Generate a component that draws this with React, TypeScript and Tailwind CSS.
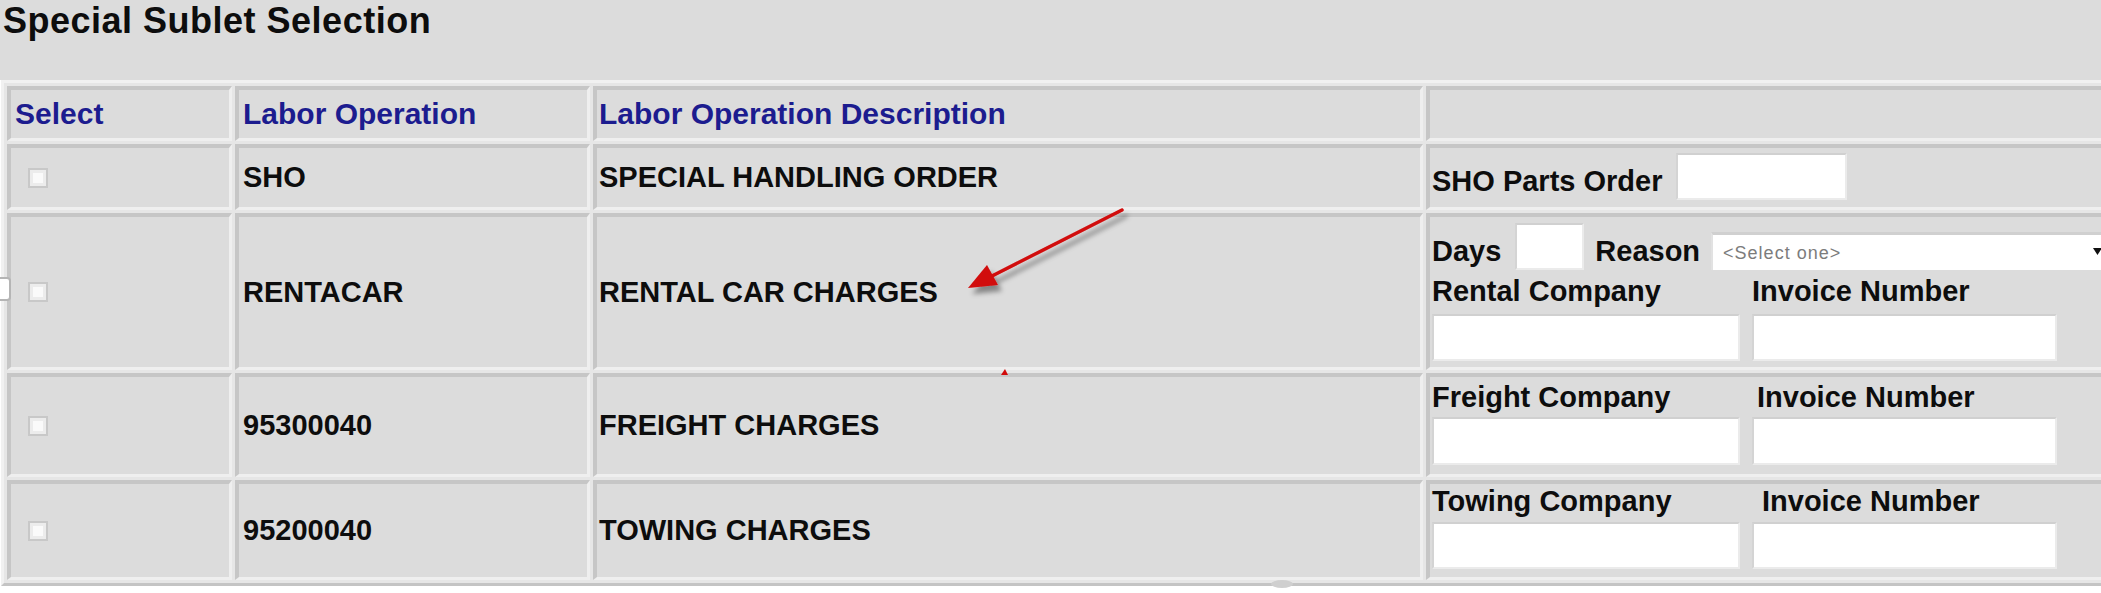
import React from "react";

const cell =
  "flex bg-[#dcdcdc] border-t-[4px] border-l-[4px] border-b-[3px] border-r-[3px] border-t-[#c6c6c6] border-l-[#c6c6c6] border-b-[#efefef] border-r-[#efefef]";
const head = "text-[30px] font-bold leading-none text-[#1c1c8f]";
const body = "text-[29px] font-bold leading-none text-[#0d0d0d]";
const input =
  "block bg-white border-2 border-t-[#d0d0d0] border-l-[#d4d4d4] border-b-[#ebebeb] border-r-[#ebebeb] outline-none";

function Checkbox() {
  return (
    <div className="ml-[17px] w-[20px] h-[20px] border-2 border-[#c8c8c8] bg-[#ececec] flex items-center justify-center">
      <div className="w-[10px] h-[10px] bg-[#fafafa]" />
    </div>
  );
}

export default function App() {
  return (
    <div className="relative w-[2101px] h-[593px] overflow-hidden bg-white font-['Liberation_Sans',Arial,sans-serif] text-[#111]">
      <div className="h-[80px] bg-[#dcdcdc] pl-[3px] pt-[3px]">
        <h1 className="text-[36px] font-bold leading-none tracking-[0.5px] text-[#0d0d0d]">
          Special Sublet Selection
        </h1>
      </div>

      <div className="ml-[1px] w-max grid grid-cols-[225px_355px_830px_720px] grid-rows-[55px_66px_157px_104px_100px] gap-[3px] p-[3px] border-[3px] border-t-[#f1f1f1] border-l-[#f1f1f1] border-b-[#c4c4c4] border-r-[#c4c4c4] bg-[#e6e6e6]">
        {/* header */}
        <div className={cell + " items-center pl-[4px]"}>
          <span className={head}>Select</span>
        </div>
        <div className={cell + " items-center pl-[4px]"}>
          <span className={head}>Labor Operation</span>
        </div>
        <div className={cell + " items-center pl-[2px]"}>
          <span className={head}>Labor Operation Description</span>
        </div>
        <div className={cell} />

        {/* SHO */}
        <div className={cell + " items-center"}>
          <Checkbox />
        </div>
        <div className={cell + " items-center pl-[4px]"}>
          <span className={body}>SHO</span>
        </div>
        <div className={cell + " items-center pl-[2px]"}>
          <span className={body}>SPECIAL HANDLING ORDER</span>
        </div>
        <div className={cell + " flex-col pl-[2px]"}>
          <div className="flex items-end mt-[5px]">
            <span className={body + " mb-[4px]"}>SHO Parts Order</span>
            <input className={input + " ml-[14px] w-[171px] h-[47px]"} />
          </div>
        </div>

        {/* RENTACAR */}
        <div className={cell + " items-center"}>
          <Checkbox />
        </div>
        <div className={cell + " items-center pl-[4px]"}>
          <span className={body}>RENTACAR</span>
        </div>
        <div className={cell + " items-center pl-[2px]"}>
          <span className={body}>RENTAL CAR CHARGES</span>
        </div>
        <div className={cell + " flex-col pl-[2px]"}>
          <div className="flex items-end mt-[6px] h-[47px]">
            <span className={body + " mb-[4px]"}>Days</span>
            <input className={input + " ml-[14px] w-[69px] h-[47px]"} />
            <span className={body + " ml-[11px] mb-[4px]"}>Reason</span>
            <div className="relative ml-[11px] w-[392px] h-[38px] bg-white border-t-[3px] border-l-2 border-t-[#d0d0d0] border-l-[#e2e2e2] flex items-center">
              <span className="pl-[10px] text-[18px] tracking-[1px] leading-none text-[#7c7c7c]">
                &lt;Select one&gt;
              </span>
              <svg className="absolute right-[1px] top-[13px]" width="9" height="7" viewBox="0 0 9 7">
                <polygon points="0,0 9,0 4.5,7" fill="#111" />
              </svg>
            </div>
          </div>
          <div className="grid grid-cols-[308px_305px] gap-x-[12px] mt-[7px]">
            <span className={body}>Rental Company</span>
            <span className={body}>Invoice Number</span>
            <input className={input + " mt-[8px] w-full h-[47px]"} />
            <input className={input + " mt-[8px] w-full h-[47px]"} />
          </div>
        </div>

        {/* FREIGHT */}
        <div className={cell + " items-center"}>
          <Checkbox />
        </div>
        <div className={cell + " items-center pl-[4px]"}>
          <span className={body}>95300040</span>
        </div>
        <div className={cell + " items-center pl-[2px]"}>
          <span className={body}>FREIGHT CHARGES</span>
        </div>
        <div className={cell + " flex-col pl-[2px]"}>
          <div className="grid grid-cols-[308px_305px] gap-x-[12px] mt-[6px]">
            <span className={body}>Freight Company</span>
            <span className={body + " pl-[5px]"}>Invoice Number</span>
            <input className={input + " mt-[5px] w-full h-[48px]"} />
            <input className={input + " mt-[5px] w-full h-[48px]"} />
          </div>
        </div>

        {/* TOWING */}
        <div className={cell + " items-center"}>
          <Checkbox />
        </div>
        <div className={cell + " items-center pl-[4px]"}>
          <span className={body}>95200040</span>
        </div>
        <div className={cell + " items-center pl-[2px]"}>
          <span className={body}>TOWING CHARGES</span>
        </div>
        <div className={cell + " flex-col pl-[2px]"}>
          <div className="grid grid-cols-[308px_305px] gap-x-[12px] mt-[3px]">
            <span className={body}>Towing Company</span>
            <span className={body + " pl-[10px]"}>Invoice Number</span>
            <input className={input + " mt-[6px] w-full h-[47px]"} />
            <input className={input + " mt-[6px] w-full h-[47px]"} />
          </div>
        </div>
      </div>

      {/* annotation overlay */}
      <svg className="absolute left-0 top-0 pointer-events-none" width="2101" height="593">
        <defs>
          <filter id="sh" x="-30%" y="-30%" width="160%" height="180%">
            <feDropShadow dx="4" dy="6" stdDeviation="2.5" floodColor="#000" floodOpacity="0.4" />
          </filter>
        </defs>
        <g filter="url(#sh)">
          <line x1="1122" y1="210" x2="990" y2="277" stroke="#d10a0a" strokeWidth="3.5" strokeLinecap="round" />
          <polygon points="968,288 998,285 987,265" fill="#d10a0a" />
        </g>
        <path d="M1001 375 L1005 369 L1008 375 Z" fill="#d10a0a" />
        <rect x="-12" y="278" width="22" height="22" rx="3" fill="#fff" stroke="#b5b5b5" strokeWidth="2" />
        <ellipse cx="1282" cy="584" rx="11" ry="4" fill="#cfcfcf" />
      </svg>
    </div>
  );
}
